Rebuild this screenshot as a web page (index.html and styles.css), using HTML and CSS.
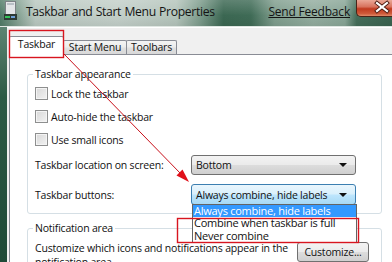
FILE: index.html
```html
<!DOCTYPE html>
<html>
<head>
<meta charset="utf-8">
<link rel="stylesheet" href="styles.css">
</head>
<body>
<div class="window">
  <div class="titlebar">
    <svg class="app-icon" width="15" height="20" viewBox="0 0 15 20">
      <rect x="2.5" y="0.5" width="10" height="13" fill="#e4e6e8" stroke="#7c8286"/>
      <rect x="4" y="2" width="7" height="2" fill="#b9c0c6"/>
      <rect x="1" y="13" width="13" height="6" fill="#2f3b35"/>
      <rect x="2" y="15" width="5" height="2" fill="#36c25a"/>
      <rect x="8" y="15" width="4" height="2" fill="#6fa0d8"/>
    </svg>
    <span class="title">Taskbar and Start Menu Properties</span>
    <span class="feedback">Send Feedback</span>
    <div class="close">
      <svg width="36" height="17" viewBox="0 0 36 17">
        <path d="M21 3 L31 11 M31 3 L21 11" stroke="#4a1a10" stroke-width="4" stroke-linecap="square"/>
        <path d="M21 3 L31 11 M31 3 L21 11" stroke="#ffffff" stroke-width="2.2" stroke-linecap="square"/>
      </svg>
    </div>
  </div>
  <div class="main">
    <div class="frame-left"></div>
    <div class="client">
      <div class="tabs">
        <div class="tab tab-active">Taskbar</div>
        <div class="tab tab-start">Start Menu</div>
        <div class="tab tab-tools">Toolbars</div>
      </div>
      <div class="panel">
        <fieldset class="group group-appearance">
          <legend>Taskbar appearance</legend>
          <div class="check"><span class="box"></span>Lock the taskbar</div>
          <div class="check"><span class="box"></span>Auto-hide the taskbar</div>
          <div class="check"><span class="box"></span>Use small icons</div>
          <div class="field field-location">
            <span class="label">Taskbar location on screen:</span>
            <div class="combo">Bottom<span class="arrow"></span></div>
          </div>
          <div class="field field-buttons">
            <span class="label">Taskbar buttons:</span>
            <div class="combo combo-open">Always combine, hide labels<span class="arrow"></span>
              <div class="list">
                <div class="item item-selected">Always combine, hide labels</div>
                <div class="item">Combine when taskbar is full</div>
                <div class="item">Never combine</div>
              </div>
            </div>
          </div>
        </fieldset>
        <fieldset class="group group-notify">
          <legend>Notification area</legend>
          <div class="notify-row">
            <p class="notify-text">Customize which icons and notifications appear in the<br>notification area.</p>
            <div class="button">Customize...</div>
          </div>
        </fieldset>
      </div>
    </div>
  </div>
  <svg class="annotations" width="392" height="262" viewBox="0 0 392 262">
    <rect x="9.5" y="30.5" width="54" height="27" fill="none" stroke="#d8151f" stroke-width="1.4"/>
    <rect x="177.5" y="218.5" width="181" height="24" fill="none" stroke="#d8151f" stroke-width="1.4"/>
    <line x1="64" y1="54" x2="181" y2="174" stroke="#c8101a" stroke-width="1"/>
    <polygon points="189,182 176.5,175.5 182.5,169.5" fill="#e0101a"/>
  </svg>
</div>
</body>
</html>
```
FILE: styles.css
```css
body {
  margin: 0;
  width: 392px;
  height: 262px;
  overflow: hidden;
  font-family: "Open Sans", "Noto Sans", sans-serif;
  font-size: 10.5px;
  letter-spacing: -0.2px;
  color: #111;
}

.window {
  position: relative;
  display: flex;
  flex-direction: column;
  height: 262px;
  overflow: hidden;
}

.titlebar {
  height: 27px;
  flex: none;
  display: flex;
  align-items: flex-start;
  background:
    linear-gradient(180deg, rgba(255,255,255,0.18) 0, rgba(255,255,255,0) 60%, rgba(0,0,0,0.06) 100%),
    linear-gradient(90deg, #4f7a66 0, #8aa597 5%, #b9c8c0 9%, #c3cfc9 30%, #b4c4bb 45%, #7d9c8c 51%, #3b6752 57%, #3f6b56 64%, #7f9d8d 70%, #93ad9f 80%, #88a596 88%, #456e5a 91%, #3a6350 100%);
  border-bottom: 1px solid #dfe6e2;
  box-sizing: border-box;
}

.app-icon {
  margin: 1px 0 0 3px;
  flex: none;
}

.title {
  margin-left: 8px;
  line-height: 24px;
  font-size: 12.2px;
  letter-spacing: -0.35px;
  word-spacing: 0.5px;
  color: #141414;
  white-space: nowrap;
}

.feedback {
  margin-left: auto;
  line-height: 24px;
  font-size: 12px;
  letter-spacing: -0.2px;
  color: #141414;
  text-decoration: underline;
  white-space: nowrap;
}

.close {
  width: 36px;
  height: 17px;
  margin-left: 6px;
  flex: none;
  box-sizing: border-box;
  border: 1px solid #4a2418;
  border-top: none;
  border-right: none;
  border-radius: 0 0 0 5px;
  background: linear-gradient(180deg, #eaa796 0, #d8735e 42%, #c03a1f 55%, #cf5a3a 85%, #e08a68 100%);
  overflow: hidden;
}

.close svg {
  display: block;
  margin-left: -1px;
}

.main {
  flex: 1;
  display: flex;
  min-height: 0;
}

.frame-left {
  width: 7px;
  flex: none;
  background: linear-gradient(180deg, #5d8472 0, #2c5a45 30%, #1f4a37 100%);
}

.client {
  flex: 1;
  display: flex;
  flex-direction: column;
  background: #f0f0f0;
  padding-left: 2px;
  border-top: 1px solid #ffffff;
  overflow: hidden;
}

.tabs {
  height: 26px;
  flex: none;
  display: flex;
  align-items: flex-end;
}

.tab {
  box-sizing: border-box;
  border: 1px solid #898c95;
  border-bottom: none;
  border-radius: 2px 2px 0 0;
  text-align: center;
  color: #111;
  background: linear-gradient(180deg, #f4f4f4 0, #ececec 45%, #e0e0e0 55%, #d8d8d8 100%);
  height: 14px;
  line-height: 12px;
  margin-left: -1px;
}

.tab-active {
  position: relative;
  z-index: 1;
  height: 19px;
  line-height: 14px;
  margin-bottom: -1px;
  margin-left: 0;
  background: #ffffff;
  width: 55px;
}

.tab-start {
  width: 64px;
}

.tab-tools {
  width: 51px;
}

.panel {
  position: relative;
  flex: 1;
  background: #ffffff;
  border-left: 1px solid #898c95;
  border-top: 1px solid #898c95;
  padding-left: 17px;
}

.group {
  margin: 12px 0 0;
  width: 355px;
  box-sizing: border-box;
  border: 1px solid #d5dfe5;
  border-radius: 3px;
  padding: 0 12px 8px 7px;
}

.group legend {
  padding: 0 2px;
  margin-left: -2px;
  line-height: 15px;
  color: #111;
}

.check {
  height: 23px;
  display: flex;
  align-items: center;
  gap: 3px;
}

.box {
  width: 13px;
  height: 13px;
  box-sizing: border-box;
  border: 1px solid #8e8f8f;
  background: linear-gradient(135deg, #d8d8d8 0, #f2f2f2 100%);
  box-shadow: inset 0 0 0 1px #f4f4f4;
}

.field {
  display: flex;
  align-items: center;
}

.field-location {
  margin-top: 4px;
}

.field-buttons {
  margin-top: 9px;
}

.label {
  width: 156px;
  flex: none;
}

.combo {
  position: relative;
  width: 165px;
  height: 20px;
  box-sizing: border-box;
  border: 1px solid #707070;
  border-radius: 3px;
  padding-left: 4px;
  display: flex;
  align-items: center;
  background: linear-gradient(180deg, #f3f3f3 0, #ebebeb 48%, #dcdcdc 52%, #cfcfcf 100%);
  white-space: nowrap;
}

.combo-open {
  height: 21px;
  border-color: #3c7fb1;
  background: linear-gradient(180deg, #eaf6fd 0, #d9f0fc 48%, #bee6fd 52%, #a7d9f5 100%);
}

.arrow {
  position: absolute;
  right: 8px;
  top: 50%;
  margin-top: -2px;
  width: 0;
  height: 0;
  border-left: 4px solid transparent;
  border-right: 4px solid transparent;
  border-top: 4px solid #111;
}

.list {
  position: absolute;
  top: 100%;
  left: 0;
  width: 165px;
  box-sizing: border-box;
  border: 1px solid #646464;
  background: #ffffff;
  z-index: 5;
  font-size: 11px;
  letter-spacing: -0.25px;
}

.item {
  height: 12.5px;
  line-height: 12.5px;
  padding-left: 1px;
  color: #111;
}

.item-selected {
  height: 12px;
  line-height: 12px;
  background: #3399ff;
  color: #ffffff;
}

.group-notify {
  margin-top: 7px;
  padding-bottom: 4px;
}

.notify-row {
  display: flex;
  justify-content: space-between;
  align-items: flex-start;
  margin-top: 5px;
}

.notify-text {
  margin: 0;
  line-height: 14px;
  white-space: nowrap;
}

.button {
  width: 72px;
  height: 20px;
  margin-top: 1px;
  box-sizing: border-box;
  border: 1px solid #707070;
  border-radius: 3px;
  text-align: center;
  line-height: 18px;
  background: linear-gradient(180deg, #f3f3f3 0, #ebebeb 48%, #dddddd 52%, #cfcfcf 100%);
  flex: none;
}

.annotations {
  position: absolute;
  top: 0;
  left: 0;
  z-index: 10;
  pointer-events: none;
}
```
